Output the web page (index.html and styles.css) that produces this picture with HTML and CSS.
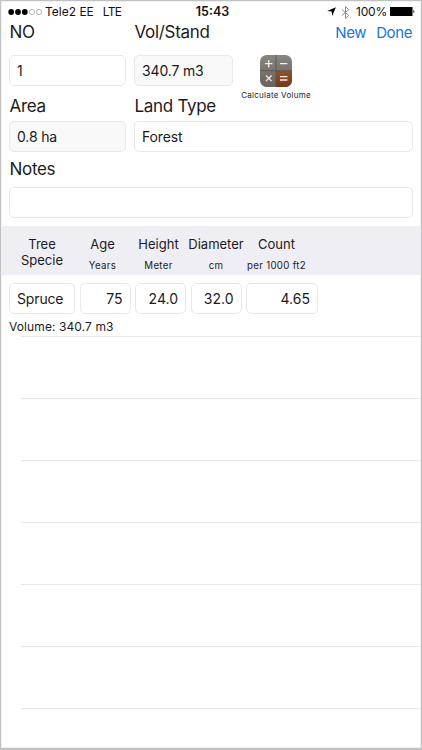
FILE: index.html
```
<!DOCTYPE html>
<html lang="en">
<head>
  <meta charset="utf-8" />
  <meta name="viewport" content="width=device-width, initial-scale=1.0"/>
  <title>Stand</title>
  <link rel="stylesheet" href="styles.css">
</head>
<body>
<div class="screen">

  <!-- Status bar -->
  <div class="status">
    <div class="carrier">
      <svg class="signal" width="35" height="8" viewBox="0 0 35 8">
        <circle cx="3.2" cy="4" r="2.9"/>
        <circle cx="10" cy="4" r="2.9"/>
        <circle cx="16.8" cy="4" r="2.9"/>
        <circle class="off" cx="24" cy="4" r="2.6"/>
        <circle class="off" cx="31" cy="4" r="2.6"/>
      </svg>
      <span class="operator">Tele2 EE</span>
      <span class="network">LTE</span>
    </div>
    <div class="time">15:43</div>
    <div class="power">
      <svg class="location" width="9" height="9" viewBox="0 0 9 9"><path d="M8.9.2 5.2 8.9 4.7 4.5.2 4z"/></svg>
      <svg class="bluetooth" width="9" height="13" viewBox="0 0 9 13"><path d="M.8 3.5 7.8 9.4 4.5 12.4V.6L7.8 3.6.8 9.5"/></svg>
      <span class="percent">100%</span>
      <svg class="battery" width="25" height="9" viewBox="0 0 25 9"><path d="M0 0h22.5v9H0zM23.4 3c1.3.3 1.3 2.7 0 3z"/></svg>
    </div>
  </div>

  <!-- Stand form -->
  <div class="form">
    <div class="row titles">
      <label class="col-no">NO</label>
      <label class="col-wide">Vol/Stand</label>
      <div class="actions"><a>New</a><a>Done</a></div>
    </div>
    <div class="row values">
      <div class="field col-no">1</div>
      <div class="field locked col-vol">340.7 m3</div>
      <div class="calc">
        <svg width="32" height="32" viewBox="0 0 32 32">
          <defs>
            <clipPath id="tile"><rect width="32" height="32" rx="6.5"/></clipPath>
            <linearGradient id="grey" x2="0" y2="1"><stop stop-color="#8b8580"/><stop offset="1" stop-color="#68625e"/></linearGradient>
            <linearGradient id="rust" x2="0" y2="1"><stop stop-color="#93502a"/><stop offset="1" stop-color="#74391a"/></linearGradient>
          </defs>
          <g clip-path="url(#tile)">
            <path fill="url(#grey)" d="M0 0h32v32H0z"/>
            <path fill="url(#rust)" d="M16 16h16v16H16z"/>
            <path stroke="#57504c" stroke-width=".8" d="M16 0v32M0 15.7h32"/>
          </g>
          <path stroke="#f2efed" stroke-width="1.3" fill="none" d="M5 8.7h7.4M8.7 5v7.4M20 8.7h7.4M6 20.5l5.6 5.6M11.6 20.5 6 26.1M20 21.6h7.4M20 25h7.4"/>
        </svg>
        <span>Calculate Volume</span>
      </div>
    </div>
    <div class="row labels">
      <label class="col-no">Area</label>
      <label class="col-wide">Land Type</label>
    </div>
    <div class="row">
      <div class="field locked col-no">0.8 ha</div>
      <div class="field col-wide">Forest</div>
    </div>
    <div class="row labels notes"><label>Notes</label></div>
    <div class="row"><div class="field col-wide"></div></div>
  </div>

  <!-- Tree table -->
  <div class="thead">
    <div class="th specie">Tree<br>Specie</div>
    <div class="th age">Age<small>Years</small></div>
    <div class="th height">Height<small>Meter</small></div>
    <div class="th diameter">Diameter<small>cm</small></div>
    <div class="th count">Count<small>per 1000 ft2</small></div>
  </div>
  <div class="tree">
    <div class="cells">
      <div class="field specie-field">Spruce</div>
      <div class="field num">75</div>
      <div class="field num">24.0</div>
      <div class="field num">32.0</div>
      <div class="field num count-field">4.65</div>
    </div>
    <div class="volume">Volume: 340.7 m3</div>
  </div>
  <div class="empty"></div>
  <div class="empty"></div>
  <div class="empty"></div>
  <div class="empty"></div>
  <div class="empty"></div>
  <div class="empty"></div>
  <div class="empty"></div>

</div>
</body>
</html>
```
FILE: styles.css
```
:root {
  --text:   #1b1b1b;
  --blue:   #1678d8;
  --line:   #e8e8e9;
  --locked: #f9f9f9;
  --band:   #efeef4;
  --frame:  #c2c2c2;
}
*, *::before, *::after { box-sizing:border-box; margin:0; padding:0; }
body {
  font-family:Inter,"Liberation Sans",sans-serif;
  color:var(--text);background:#fff;
}
svg { display:block;flex:none; }
.screen {
  width:422px;height:750px;overflow:hidden;
  border:1px solid var(--frame);border-bottom-width:2px;
  box-shadow:inset 0 0 0 1px #f0f0f0;
}

/* Status bar */
.status {
  display:grid;grid-template-columns:1fr auto 1fr;align-items:center;
  height:21px;padding:1px 6px 0 7px;
  font-size:12px;line-height:20px;color:#111;
}
.carrier, .power { display:flex;align-items:center; }
.power { justify-content:flex-end; }
.signal .off { fill:none;stroke:#999;stroke-width:.7; }
.operator { margin-left:2px; }
.network { margin-left:9px;letter-spacing:-.7px; }
.time { font-weight:600;font-size:12.5px;padding-left:2px; }
.location { margin-top:-1px; }
.bluetooth { margin:0 6px 0 5px; }
.bluetooth path { fill:none;stroke:#8d8d8d;stroke-width:1; }
.percent { letter-spacing:-.2px; }
.battery { margin-left:3px;margin-top:-1px; }

/* Form */
.form { height:204px;padding:0 8px; }
.row { display:flex;gap:8px; }
label { font-size:17px;line-height:20px;letter-spacing:-.3px;padding-left:.5px; }
.titles { height:33px; }
.values { height:40px; }
.labels { height:26px;padding-top:1px; }
.notes { height:35px;padding-top:7px; }
.col-no { width:117px;flex:none; }
.col-vol { width:99px;flex:none; }
.col-wide { flex:1; }
.field {
  height:31px;padding:0 7px;
  border:1px solid var(--line);border-radius:5px;
  font-size:14px;line-height:29px;letter-spacing:-.15px;white-space:nowrap;
}
.locked { background:var(--locked); }
.actions {
  display:flex;gap:10px;padding:1px 1px 0 0;
  font-size:15px;line-height:20px;letter-spacing:-.4px;color:var(--blue);
}
.calc {
  display:flex;flex-direction:column;align-items:center;
  width:70px;font-size:8px;line-height:12px;white-space:nowrap;
}
.calc span { margin-top:2px;letter-spacing:.25px; }

/* Table */
.thead {
  display:flex;height:49px;padding-top:10px;
  background:var(--band);text-align:center;
  font-size:13px;line-height:16px;
}
.th { flex:none;white-space:nowrap; }
.th small { display:block;font-size:9.7px;line-height:14px;letter-spacing:.3px;margin-top:7px; }
.specie { width:82px; }
.age { width:39px; }
.height { width:73px; }
.diameter { width:42px;display:flex;flex-direction:column;align-items:center; }
.count { width:79px; }
.tree { height:61px;padding:8px 8px 0; }
.cells { display:flex;gap:4.5px; }
.num { width:51px;text-align:right;letter-spacing:0; }
.specie-field { width:66px; }
.count-field { width:72px; }
.volume { font-size:12px;line-height:16px;letter-spacing:.1px;margin-top:5px; }
.empty { height:62px;margin-left:20px;border-top:1px solid var(--line); }
```
